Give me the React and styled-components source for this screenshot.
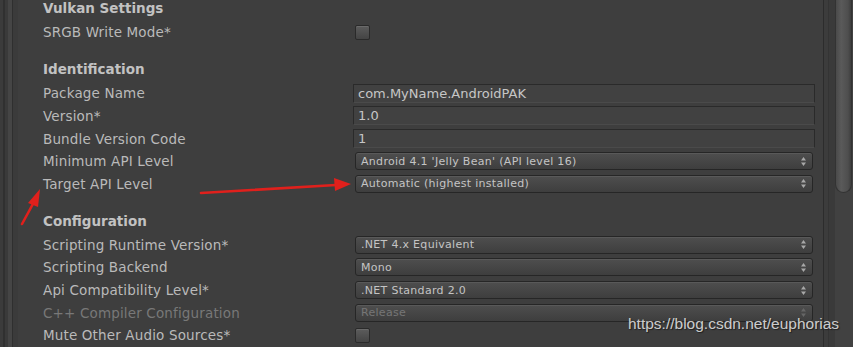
import React from 'react';
import styled, { createGlobalStyle } from 'styled-components';

const GlobalStyle = createGlobalStyle`
	html, body {
		margin: 0;
		padding: 0;
		background: #3e3e3e;
		overflow: hidden;
	}
`;

const sections = [
	{
		title: 'Vulkan Settings',
		rows: [{ label: 'SRGB Write Mode*', type: 'check' }],
	},
	{
		title: 'Identification',
		rows: [
			{ label: 'Package Name', type: 'text', value: 'com.MyName.AndroidPAK' },
			{ label: 'Version*', type: 'text', value: '1.0' },
			{ label: 'Bundle Version Code', type: 'text', value: '1' },
			{ label: 'Minimum API Level', type: 'select', value: "Android 4.1 'Jelly Bean' (API level 16)" },
			{ label: 'Target API Level', type: 'select', value: 'Automatic (highest installed)' },
		],
	},
	{
		title: 'Configuration',
		rows: [
			{ label: 'Scripting Runtime Version*', type: 'select', value: '.NET 4.x Equivalent' },
			{ label: 'Scripting Backend', type: 'select', value: 'Mono' },
			{ label: 'Api Compatibility Level*', type: 'select', value: '.NET Standard 2.0' },
			{ label: 'C++ Compiler Configuration', type: 'select', value: 'Release', disabled: true },
			{ label: 'Mute Other Audio Sources*', type: 'check' },
		],
	},
];

const App = () => {
	return (
		<Page>
			<GlobalStyle />
			<LeftRail />
			<Inspector>
				{sections.map((section) => (
					<Section key={section.title}>
						<Header>{section.title}</Header>
						{section.rows.map((row) => (
							<Row key={row.label}>
								<Label disabled={row.disabled}>{row.label}</Label>
								{row.type === 'check' && <Checkbox />}
								{row.type === 'text' && <TextField>{row.value}</TextField>}
								{row.type === 'select' && (
									<Select disabled={row.disabled}>
										<span>{row.value}</span>
										<Stepper viewBox="0 0 5 9" disabled={row.disabled}>
											<path d="M2.5 0 L5 3.5 L0 3.5 Z" />
											<path d="M2.5 9 L5 5.5 L0 5.5 Z" />
										</Stepper>
									</Select>
								)}
							</Row>
						))}
					</Section>
				))}
			</Inspector>
			<RightRail>
				<Track>
					<Thumb />
				</Track>
			</RightRail>
			<Arrows viewBox="0 0 853 347">
				<line x1="22" y1="224" x2="34" y2="202" />
				<polygon points="40,189 28,203 38,207" />
				<line x1="201" y1="193" x2="336" y2="185" />
				<polygon points="351,184 334,178 335,191" />
			</Arrows>
			<Watermark>https://blog.csdn.net/euphorias</Watermark>
		</Page>
	);
};

export default App;

const Page = styled.div`
	position: relative;
	display: flex;
	width: 853px;
	height: 347px;
	overflow: hidden;
	background: #3e3e3e;
	font-family: 'DejaVu Sans', 'Liberation Sans', sans-serif;
`;

const LeftRail = styled.div`
	flex: 0 0 18px;
	background: linear-gradient(
		to right,
		#3b3b3b 0 3px,
		#303030 3px 5px,
		#3a3a3a 5px 8px,
		#454545 8px 12px,
		#2f2f2f 12px 13px,
		#3b3b3b 13px 18px
	);
`;

const Inspector = styled.div`
	flex: 1;
	padding: 0 8px 0 25px;
	margin-top: -5px;
`;

const Section = styled.div`
	margin-bottom: 12.5px;
`;

const Header = styled.div`
	height: 26px;
	line-height: 26px;
	font-size: 13.5px;
	font-weight: bold;
	color: #c2c2c2;
`;

const Row = styled.div`
	display: flex;
	align-items: center;
	height: 22.6px;
`;

const Label = styled.div`
	flex: 0 0 310px;
	font-size: 13.5px;
	letter-spacing: 0.15px;
	color: ${(p) => (p.disabled ? '#787878' : '#bababa')};
	white-space: nowrap;
`;

const Checkbox = styled.div`
	width: 13px;
	height: 13px;
	margin-left: 2px;
	border: 1px solid #2a2a2a;
	border-radius: 2px;
	background: linear-gradient(#5c5c5c, #444444);
	box-shadow: inset 0 1px 0 #6a6a6a;
`;

const TextField = styled.div`
	flex: 1;
	height: 17px;
	line-height: 17px;
	padding: 0 4px;
	border: 1px solid #2a2a2a;
	border-bottom-color: #4a4a4a;
	background: #414141;
	font-size: 13px;
	color: #c6c6c6;
`;

const Select = styled.div`
	flex: 1;
	display: flex;
	align-items: center;
	justify-content: space-between;
	height: 16px;
	margin: 0 2px;
	padding: 0 6px 0 5px;
	border: 1px solid #262626;
	border-radius: 3px;
	background: linear-gradient(#4e4e4e, #3e3e3e);
	box-shadow: inset 0 1px 0 #595959;
	font-size: 11px;
	letter-spacing: 0.3px;
	color: ${(p) => (p.disabled ? '#767676' : '#c4c4c4')};
`;

const Stepper = styled.svg`
	width: 5px;
	height: 9px;
	fill: ${(p) => (p.disabled ? '#666666' : '#a8a8a8')};
`;

const RightRail = styled.div`
	flex: 0 0 30px;
	display: flex;
	background: linear-gradient(
		to right,
		#2c2c2c 0 1px,
		#3c3c3c 1px 5px,
		#343434 5px 6px,
		#3a3a3a 6px 12px
	);
	justify-content: flex-end;
`;

const Track = styled.div`
	width: 18px;
	background: #414141;
`;

const Thumb = styled.div`
	width: 17px;
	height: 193px;
	border-radius: 0 0 9px 9px;
	background: linear-gradient(to right, #4a4a4a, #5a5a5a 35%, #4e4e4e 80%, #3e3e3e);
	border: 1px solid #333333;
	border-top: none;
	box-sizing: border-box;
`;

const Arrows = styled.svg`
	position: absolute;
	left: 0;
	top: 0;
	width: 853px;
	height: 347px;
	pointer-events: none;
	line {
		stroke: #e0201c;
		stroke-width: 2.6;
		stroke-linecap: round;
	}
	polygon {
		fill: #e0201c;
	}
`;

const Watermark = styled.div`
	position: absolute;
	left: 628px;
	top: 315px;
	font-family: 'Liberation Sans', Arial, sans-serif;
	font-size: 15.5px;
	color: rgba(225, 225, 225, 0.9);
	text-shadow: 1px 1px 1px rgba(0, 0, 0, 0.5);
	white-space: nowrap;
`;
